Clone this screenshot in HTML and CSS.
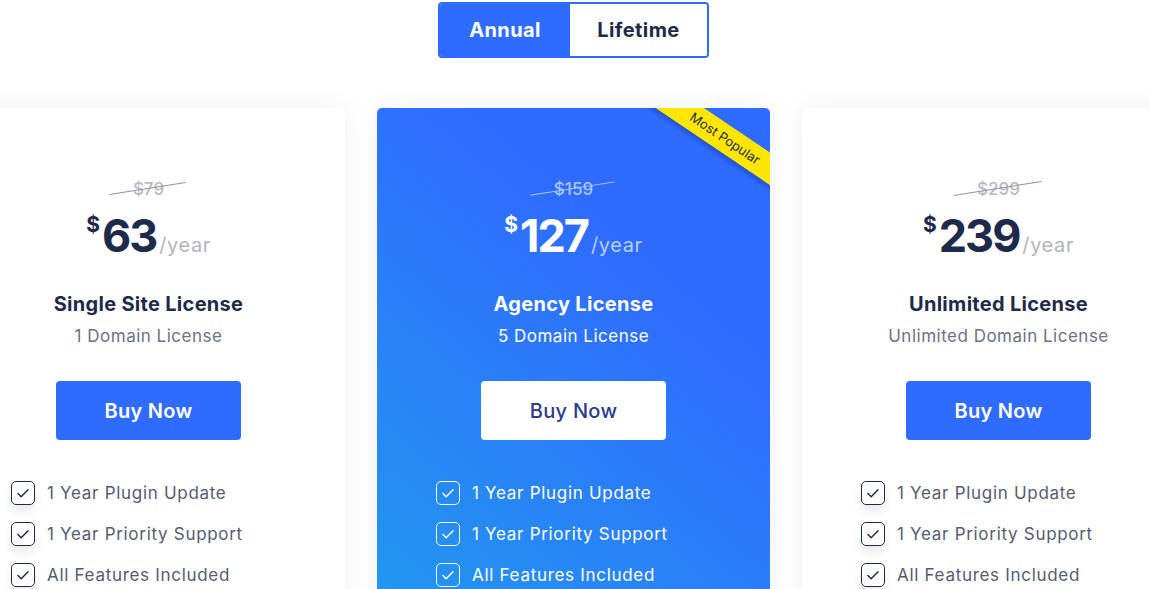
FILE: index.html
```html
<!DOCTYPE html>
<html lang="en">
<head>
<meta charset="utf-8">
<title>Pricing</title>
<link rel="stylesheet" href="styles.css">
</head>
<body>
<div class="page">
  <div class="toggle">
    <button class="toggle-btn active">Annual</button>
    <button class="toggle-btn">Lifetime</button>
  </div>
  <div class="cards">
    <div class="card">
      <div class="old-price">$79</div>
      <div class="price"><span class="cur">$</span><span class="amount">63</span><span class="per">/year</span></div>
      <div class="title">Single Site License</div>
      <div class="subtitle">1 Domain License</div>
      <a class="buy">Buy Now</a>
      <ul class="features">
        <li><span class="check"><svg viewBox="0 0 24 24"><path d="M6.5 12.5l3.5 3.5L17.5 8.5"/></svg></span>1 Year Plugin Update</li>
        <li><span class="check"><svg viewBox="0 0 24 24"><path d="M6.5 12.5l3.5 3.5L17.5 8.5"/></svg></span>1 Year Priority Support</li>
        <li><span class="check"><svg viewBox="0 0 24 24"><path d="M6.5 12.5l3.5 3.5L17.5 8.5"/></svg></span>All Features Included</li>
      </ul>
    </div>
    <div class="card featured">
      <div class="ribbon">Most Popular</div>
      <div class="old-price">$159</div>
      <div class="price"><span class="cur">$</span><span class="amount">127</span><span class="per">/year</span></div>
      <div class="title">Agency License</div>
      <div class="subtitle">5 Domain License</div>
      <a class="buy">Buy Now</a>
      <ul class="features">
        <li><span class="check"><svg viewBox="0 0 24 24"><path d="M6.5 12.5l3.5 3.5L17.5 8.5"/></svg></span>1 Year Plugin Update</li>
        <li><span class="check"><svg viewBox="0 0 24 24"><path d="M6.5 12.5l3.5 3.5L17.5 8.5"/></svg></span>1 Year Priority Support</li>
        <li><span class="check"><svg viewBox="0 0 24 24"><path d="M6.5 12.5l3.5 3.5L17.5 8.5"/></svg></span>All Features Included</li>
      </ul>
    </div>
    <div class="card">
      <div class="old-price">$299</div>
      <div class="price"><span class="cur">$</span><span class="amount">239</span><span class="per">/year</span></div>
      <div class="title">Unlimited License</div>
      <div class="subtitle">Unlimited Domain License</div>
      <a class="buy">Buy Now</a>
      <ul class="features">
        <li><span class="check"><svg viewBox="0 0 24 24"><path d="M6.5 12.5l3.5 3.5L17.5 8.5"/></svg></span>1 Year Plugin Update</li>
        <li><span class="check"><svg viewBox="0 0 24 24"><path d="M6.5 12.5l3.5 3.5L17.5 8.5"/></svg></span>1 Year Priority Support</li>
        <li><span class="check"><svg viewBox="0 0 24 24"><path d="M6.5 12.5l3.5 3.5L17.5 8.5"/></svg></span>All Features Included</li>
      </ul>
    </div>
  </div>
</div>
</body>
</html>
```

FILE: styles.css
```css
* { box-sizing: border-box; }
html, body { margin: 0; padding: 0; }
body {
  background: #ffffff;
  font-family: "Inter", "Noto Sans", sans-serif;
  overflow: hidden;
  width: 1149px;
  height: 589px;
}
.page {
  display: flex;
  flex-direction: column;
  align-items: center;
  padding-top: 2px;
}
.toggle {
  display: flex;
  width: 271px;
  height: 56px;
  border: 2px solid #2f6bff;
  border-radius: 4px;
  overflow: hidden;
  background: #fff;
  margin-right: 2px;
}
.toggle-btn {
  flex: 1 1 0;
  border: 0;
  margin: 0;
  padding: 0;
  font-family: inherit;
  font-size: 20px;
  font-weight: 700;
  letter-spacing: 0.4px;
  color: #1e2a4a;
  background: #fff;
}
.toggle-btn.active {
  background: #2f6bff;
  color: #fff;
  flex: 0 0 130px;
}
.cards {
  display: flex;
  gap: 32px;
  justify-content: center;
  margin-top: 50px;
  width: 1149px;
  padding-right: 2px;
}
.card {
  flex: 0 0 393px;
  height: 520px;
  background: #fff;
  border-radius: 5px;
  box-shadow: 0 0 24px rgba(30, 40, 80, 0.07);
  display: flex;
  flex-direction: column;
  align-items: center;
  padding-top: 70px;
  position: relative;
  overflow: hidden;
}
.old-price {
  position: relative;
  font-size: 17px;
  color: #b9b9c2;
  line-height: 22px;
  font-weight: 500;
}
.old-price::after {
  content: "";
  position: absolute;
  left: -24px;
  right: -22px;
  top: 10px;
  height: 1px;
  background: #8f8fa8;
  transform: rotate(-9deg);
}
.price {
  display: flex;
  align-items: baseline;
  margin-top: 8px;
  height: 56px;
  color: #1e2a4a;
}
.cur {
  font-size: 21px;
  font-weight: 700;
  line-height: 22px;
  align-self: flex-start;
  margin-top: 6px;
  margin-right: 2px;
}
.amount {
  font-size: 45px;
  font-weight: 700;
  line-height: 56px;
  letter-spacing: -2px;
}
.per {
  font-size: 20px;
  color: #b4b4bd;
  margin-left: 3px;
  letter-spacing: 0.6px;
}
.title {
  margin-top: 28px;
  font-size: 20px;
  font-weight: 700;
  letter-spacing: 0.3px;
  color: #1e2a4a;
  line-height: 24px;
}
.subtitle {
  margin-top: 9px;
  font-size: 17px;
  letter-spacing: 0.5px;
  color: #6c7185;
  line-height: 22px;
  font-weight: 400;
}
.buy {
  margin-top: 34px;
  width: 185px;
  height: 59px;
  border-radius: 4px;
  background: #2f6bff;
  color: #fff;
  font-size: 20px;
  font-weight: 600;
  letter-spacing: 0.3px;
  display: flex;
  align-items: center;
  justify-content: center;
}
.features {
  list-style: none;
  margin: 41px 0 0 0;
  padding: 0 0 0 59px;
  align-self: stretch;
  display: flex;
  flex-direction: column;
  gap: 17px;
}
.features li {
  display: flex;
  align-items: center;
  gap: 12px;
  font-size: 17px;
  letter-spacing: 0.7px;
  color: #555c72;
  height: 24px;
}
.check {
  flex: 0 0 24px;
  width: 24px;
  height: 24px;
  border: 1.5px solid #1e2a4a;
  border-radius: 5px;
  display: flex;
  align-items: center;
  justify-content: center;
  box-shadow: 0 6px 10px rgba(30, 40, 80, 0.1);
}
.check svg {
  width: 22px;
  height: 22px;
  fill: none;
  stroke: #1e2a4a;
  stroke-width: 1.6;
  stroke-linecap: round;
  stroke-linejoin: round;
}
.featured {
  background: linear-gradient(40deg, #2199ef 0%, #2a7ff8 40%, #2f6bff 70%);
}
.featured .old-price { color: #a9c6f7; }
.featured .old-price::after { background: #b3cdf8; }
.featured .price { color: #fff; }
.featured .per { color: #b7d0fb; }
.featured .title, .featured .subtitle { color: #fff; }
.featured .buy { background: #fff; color: #2a3b8f; font-weight: 500; }
.featured .features li { color: #fff; }
.featured .check { border-color: #fff; box-shadow: none; }
.featured .check svg { stroke: #fff; }
.ribbon {
  position: absolute;
  top: 17px;
  right: -55px;
  width: 200px;
  height: 27px;
  background: #ffe600;
  color: #1e2a4a;
  font-size: 13px;
  line-height: 27px;
  text-align: center;
  transform: rotate(34deg);
  box-shadow: 0 4px 3px rgba(20, 50, 150, 0.35);
}
```
